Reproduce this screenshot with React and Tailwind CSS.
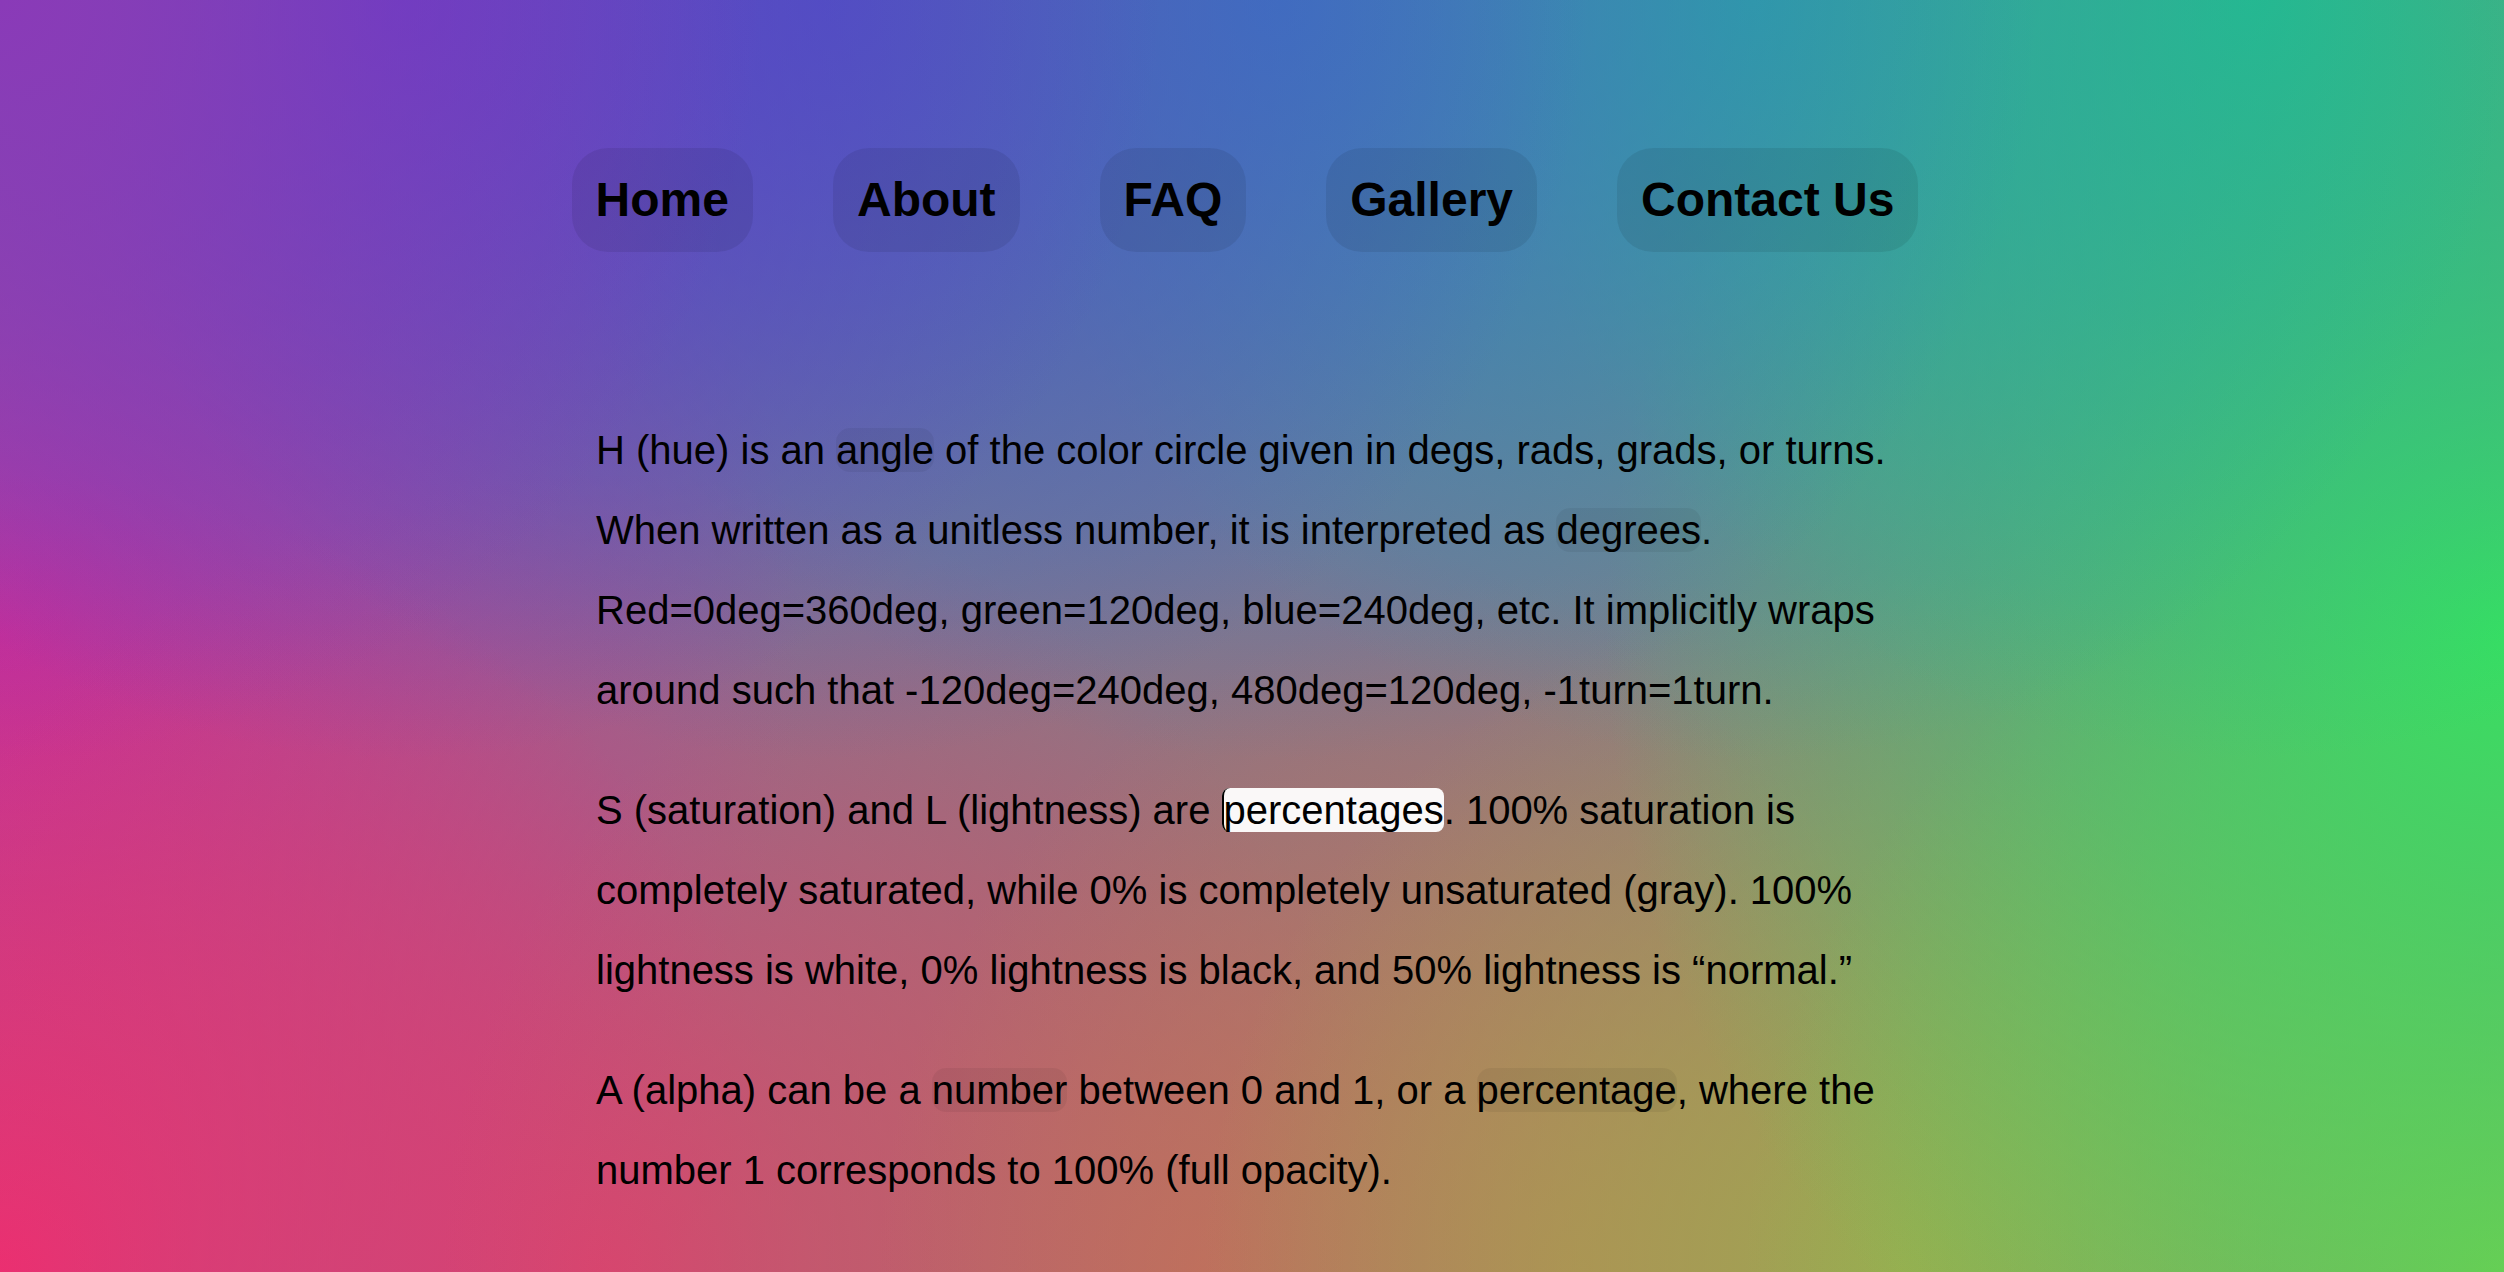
import React from 'react';

const links = ['Home', 'About', 'FAQ', 'Gallery', 'Contact Us'];

// faint word chip, and the one "active" white chip
const Chip = ({ children }) => (
    <span className="rounded-[14px] bg-black/[0.055]">{children}</span>
);

const Active = ({ children }) => (
    <span className="rounded-[8px] border-l-2 border-black bg-white/95">{children}</span>
);

export default function App() {
    return (
        <div className="min-h-screen w-full bg-[#7f7a8e] bg-[radial-gradient(circle_760px_at_0%_0%,#8a3ab8,transparent),radial-gradient(circle_760px_at_16%_0%,#5e3ec8,transparent),radial-gradient(circle_760px_at_33%_0%,#4a58c0,transparent),radial-gradient(circle_760px_at_51%_0%,#3a78c0,transparent),radial-gradient(circle_760px_at_70%_0%,#2aa8a0,transparent),radial-gradient(circle_760px_at_90%_0%,#22c08a,transparent),radial-gradient(circle_900px_at_100%_50%,#38e060,transparent),radial-gradient(circle_760px_at_100%_100%,#78c850,transparent),radial-gradient(circle_700px_at_76%_100%,#a0a850,transparent),radial-gradient(circle_700px_at_63%_100%,#b88058,transparent),radial-gradient(circle_760px_at_48%_100%,#c46262,transparent),radial-gradient(circle_800px_at_24%_100%,#dc3e72,transparent),radial-gradient(circle_800px_at_0%_100%,#f02a70,transparent),radial-gradient(circle_800px_at_0%_50%,#c02ea0,transparent)] font-['Liberation_Sans',Arial,sans-serif] text-black">
            <nav className="flex justify-center gap-20 pr-[14px] pt-[148px]">
                {links.map(l => (
                    <a key={l} href="#" className="rounded-[36px] bg-black/[0.08] px-6 py-6 text-[48px] font-bold leading-[56px]">
                        {l}
                    </a>
                ))}
            </nav>

            <main className="mx-auto mt-[158px] w-[1312px] text-[40px] leading-[80px]">
                <p>
                    H (hue) is an <Chip>angle</Chip> of the color circle given in degs, rads, grads, or turns. When written as a unitless number, it is interpreted as <Chip>degrees</Chip>. Red=0deg=360deg, green=120deg, blue=240deg, etc. It implicitly wraps around such that -120deg=240deg, 480deg=120deg, -1turn=1turn.
                </p>
                <p className="mt-10">
                    S (saturation) and L (lightness) are <Active>percentages</Active>. 100% saturation is completely saturated, while 0% is completely unsaturated (gray). 100% lightness is white, 0% lightness is black, and 50% lightness is “normal.”
                </p>
                <p className="mt-10">
                    A (alpha) can be a <Chip>number</Chip> between 0 and 1, or a <Chip>percentage</Chip>, where the number 1 corresponds to 100% (full opacity).
                </p>
            </main>
        </div>
    );
}
